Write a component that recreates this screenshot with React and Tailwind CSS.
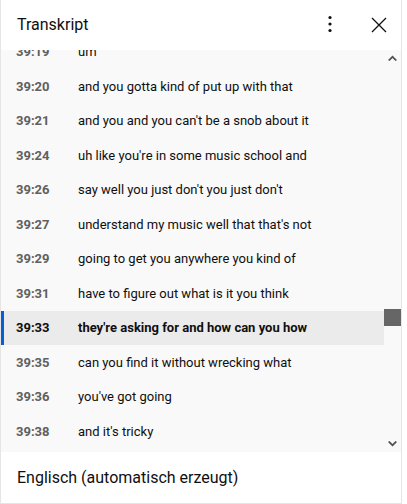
import React from "react";

const rows = [
  ["39:19", "um"],
  ["39:20", "and you gotta kind of put up with that"],
  ["39:21", "and you and you can't be a snob about it"],
  ["39:24", "uh like you're in some music school and"],
  ["39:26", "say well you just don't you just don't"],
  ["39:27", "understand my music well that that's not"],
  ["39:29", "going to get you anywhere you kind of"],
  ["39:31", "have to figure out what is it you think"],
  ["39:33", "they're asking for and how can you how", true],
  ["39:35", "can you find it without wrecking what"],
  ["39:36", "you've got going"],
  ["39:38", "and it's tricky"],
];

const Row = ({ time, text, active }) => (
  <div
    className={`flex items-center h-[34.5px] shrink-0 border-l-[3px] ${
      active ? "bg-[#ebebeb] border-[#065fd4] font-bold" : "border-transparent"
    }`}
  >
    <div
      className={`w-[74px] pl-[12px] font-bold text-[13px] ${
        active ? "text-[#0f0f0f]" : "text-[#606060]"
      }`}
    >
      {time}
    </div>
    <div className="text-[13px] text-[#0f0f0f] whitespace-nowrap">{text}</div>
  </div>
);

export default function App() {
  return (
    <div
      className="w-[402px] h-[504px] flex flex-col bg-white border-x border-b border-[#e5e5e5]"
      style={{ fontFamily: "Roboto, 'Liberation Sans', sans-serif" }}
    >
      {/* kopfzeile */}
      <div className="h-[50px] shrink-0 flex items-center pl-[16px] pr-[14px]">
        <div className="flex-1 text-[16px] text-[#0f0f0f]">Transkript</div>
        <svg width="6" height="18" viewBox="0 0 6 18" className="mr-[38px] mt-[-2px]">
          <circle cx="3" cy="2.5" r="1.6" fill="#0f0f0f" />
          <circle cx="3" cy="9" r="1.6" fill="#0f0f0f" />
          <circle cx="3" cy="15.5" r="1.6" fill="#0f0f0f" />
        </svg>
        <svg width="16" height="16" viewBox="0 0 16 16">
          <path d="M1 1 L15 15 M15 1 L1 15" stroke="#0f0f0f" strokeWidth="1.3" fill="none" />
        </svg>
      </div>

      {/* liste */}
      <div className="h-[402px] shrink-0 flex bg-[#f9f9f9] overflow-hidden">
        <div className="flex-1 overflow-hidden">
          <div className="flex flex-col mt-[-15.25px]">
            {rows.map(([t, s, a]) => (
              <Row key={t} time={t} text={s} active={a} />
            ))}
          </div>
        </div>
        <div className="w-[17px] shrink-0 flex flex-col items-center">
          <svg width="9" height="6" viewBox="0 0 9 6" className="mt-[5px]">
            <path d="M0 5 L4.5 0.5 L9 5 L7.5 6 L4.5 3 L1.5 6 Z" fill="#505050" />
          </svg>
          <div className="h-[248px]" />
          <div className="w-[17px] h-[17px] bg-[#666666]" />
          <div className="flex-1" />
          <svg width="9" height="6" viewBox="0 0 9 6" className="mb-[5px]">
            <path d="M0 1 L4.5 5.5 L9 1 L7.5 0 L4.5 3 L1.5 0 Z" fill="#505050" />
          </svg>
        </div>
      </div>

      {/* fußzeile */}
      <div className="flex-1 flex items-center pl-[16px] text-[16px] text-[#0f0f0f]">
        Englisch (automatisch erzeugt)
      </div>
    </div>
  );
}
